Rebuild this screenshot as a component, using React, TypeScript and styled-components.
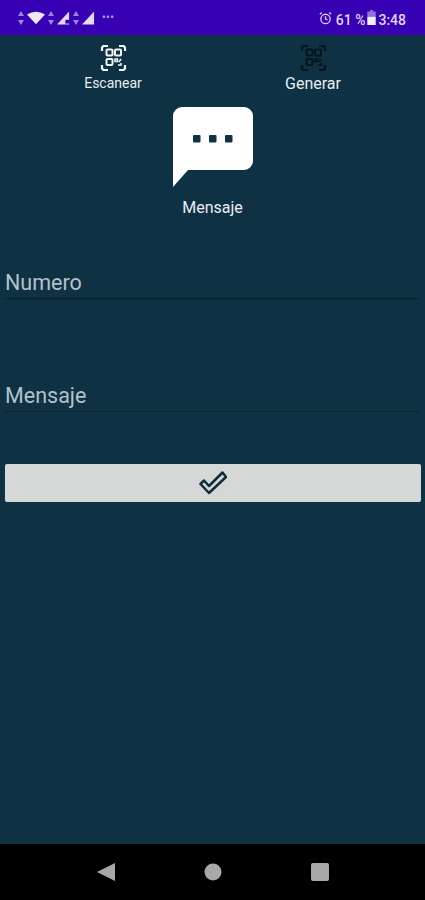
import styled, { createGlobalStyle } from 'styled-components';

const Global = createGlobalStyle`
  html, body {
    margin: 0;
    padding: 0;
    background: #0f3144;
  }
  * {
    box-sizing: border-box;
  }
`;

const Screen = styled.div`
  width: 425px;
  height: 900px;
  display: flex;
  flex-direction: column;
  overflow: hidden;
  font-family: Roboto, 'Liberation Sans', sans-serif;
  background: #0f3144;
`;

const StatusBar = styled.div`
  height: 35px;
  flex: none;
  display: flex;
  align-items: center;
  justify-content: space-between;
  padding: 0 19px 0 17px;
  background: #3700b3;
  color: #d9c9f5;
`;

const StatusGroup = styled.div`
  display: flex;
  align-items: center;
  gap: 2px;
`;

const StatusText = styled.span<{ $gap?: number }>`
  font-size: 14px;
  font-weight: 500;
  line-height: 16px;
  margin-left: ${(p) => p.$gap ?? 0}px;
  margin-top: 4px;
  color: #e0d4f7;
`;

const Dots = styled.span`
  margin-left: 5px;
  font-size: 10px;
  line-height: 10px;
  font-weight: 700;
  letter-spacing: 0.5px;
  color: #b49ce6;
`;

const Main = styled.main`
  flex: 1;
  display: flex;
  flex-direction: column;
`;

const Tabs = styled.div`
  display: grid;
  grid-template-columns: 200px 200px;
  padding: 10px 12px 0 13px;
`;

const Tab = styled.div<{ $large?: boolean }>`
  display: flex;
  flex-direction: column;
  align-items: center;
  gap: 4px;
  font-size: ${(p) => (p.$large ? 16 : 14)}px;
  line-height: 17px;
  color: #e8eef0;
`;

const Hero = styled.div`
  display: flex;
  flex-direction: column;
  align-items: center;
  margin-top: 15px;
`;

const HeroLabel = styled.div`
  margin-top: 12px;
  font-size: 16px;
  line-height: 18px;
  color: #e8eef0;
`;

const Form = styled.form`
  display: flex;
  flex-direction: column;
  gap: 74px;
  padding: 0 5px;
  margin-top: 43px;
`;

const Input = styled.input`
  display: block;
  width: 100%;
  height: 39px;
  padding: 10px 0 3px 0;
  border: none;
  border-bottom: 1px solid #0a2330;
  outline: none;
  background: transparent;
  font-family: inherit;
  font-size: 21.5px;
  color: #fff;
  &::placeholder {
    color: #b4c1c9;
    opacity: 1;
  }
`;

const SubmitButton = styled.button`
  display: flex;
  align-items: center;
  justify-content: center;
  width: 416px;
  height: 38px;
  margin: 52px 0 0 5px;
  padding: 0;
  border: none;
  border-radius: 2px;
  background: #d6d7d7;
`;

const NavBar = styled.nav`
  height: 56px;
  flex: none;
  display: grid;
  grid-template-columns: 107px 107px 107px;
  justify-content: center;
  align-items: center;
  justify-items: center;
  background: #000;
`;

const QrIcon = ({ color }: { color: string }) => (
  <svg width="27" height="26" viewBox="0 0 27 26" fill="none" stroke={color} strokeWidth="2">
    <path d="M2 6V2.500L3.500 1H8M19 1h4.500L25 2.500V6M2 20v3.500L3.500 25H8M19 25h4.500l1.500-1.500V20" strokeWidth="2.200" />
    <rect x="6.500" y="4.500" width="6" height="6" rx="1" />
    <rect x="15" y="4.500" width="6" height="6" rx="1" />
    <rect x="6.500" y="14" width="6" height="6" rx="1" />
    <path d="M15 14h2.500v2.500H15zM19 17l2-3M18 20h3v-2" strokeWidth="1.500" />
  </svg>
);

const Bubble = () => (
  <svg width="80" height="80" viewBox="0 0 80 80">
    <path
      fill="#fff"
      d="M9 0H71a9 9 0 0 1 9 9V54a9 9 0 0 1-9 9H15L0 80V9a9 9 0 0 1 9-9Z"
    />
    <rect x="20" y="28" width="7.500" height="7.500" rx="1" fill="#0f3144" />
    <rect x="36" y="28" width="7.500" height="7.500" rx="1" fill="#0f3144" />
    <rect x="52" y="28" width="7.500" height="7.500" rx="1" fill="#0f3144" />
  </svg>
);

const Check = () => (
  <svg width="28" height="24" viewBox="0 0 28 24" fill="none">
    <path
      d="M1.500 13 L10 22 L27 6 L23.500 1.500 L10 15 L5 9.500 Z"
      stroke="#0f2c3d"
      strokeWidth="2.500"
      strokeLinejoin="round"
    />
  </svg>
);

const Arrows = () => (
  <svg width="8" height="14" viewBox="0 0 8 14" fill="#9f84e0">
    <path d="M4 0l3 5H1zM4 14l3-5H1z" />
  </svg>
);

const Wifi = () => (
  <svg width="18" height="14" viewBox="0 0 20 14" fill="#efe8fb">
    <path d="M0 3Q10-3 20 3L10 14Z" />
  </svg>
);

const Signal = ({ x }: { x?: boolean }) => (
  <svg width="13" height="14" viewBox="0 0 14 14" fill="#e3d9f8">
    <path d="M0 14L13 0V14Z" />
    {x && <rect x="9" y="9" width="4" height="4" fill="#3700b3" />}
  </svg>
);

const Alarm = () => (
  <svg width="13" height="14" viewBox="0 0 14 14" fill="none" stroke="#d9c9f5" strokeWidth="1.500">
    <circle cx="7" cy="8" r="5" />
    <path d="M7 5v3l2 1M1 3l2-2M13 3l-2-2" />
  </svg>
);

const Battery = () => (
  <svg width="9" height="15" viewBox="0 0 9 16">
    <path d="M3 0h3v1.500h3V7H0V1.500h3z" fill="#8f73d6" />
    <rect y="7" width="9" height="9" fill="#f2edfc" />
  </svg>
);

export default function App() {
  return (
    <Screen>
      <Global />
      <StatusBar>
        <StatusGroup>
          <Arrows />
          <Wifi />
          <Arrows />
          <Signal x />
          <Arrows />
          <Signal />
          <Dots>•••</Dots>
        </StatusGroup>
        <StatusGroup>
          <Alarm />
          <StatusText $gap={2}>61 %</StatusText>
          <Battery />
          <StatusText>3:48</StatusText>
        </StatusGroup>
      </StatusBar>
      <Main>
        <Tabs>
          <Tab>
            <QrIcon color="#f2f5f6" />
            Escanear
          </Tab>
          <Tab $large>
            <QrIcon color="#06141c" />
            Generar
          </Tab>
        </Tabs>
        <Hero>
          <Bubble />
          <HeroLabel>Mensaje</HeroLabel>
        </Hero>
        <Form onSubmit={(e) => e.preventDefault()}>
          <Input placeholder="Numero" />
          <Input placeholder="Mensaje" />
        </Form>
        <SubmitButton type="button">
          <Check />
        </SubmitButton>
      </Main>
      <NavBar>
        <svg width="18" height="18" viewBox="0 0 18 18" fill="#a8a8a8">
          <path d="M0 9L18 0V18Z" />
        </svg>
        <svg width="18" height="18" viewBox="0 0 18 18" fill="#a8a8a8">
          <circle cx="9" cy="9" r="8.500" />
        </svg>
        <svg width="18" height="18" viewBox="0 0 18 18" fill="#a8a8a8">
          <rect width="18" height="18" rx="2" />
        </svg>
      </NavBar>
    </Screen>
  );
}
